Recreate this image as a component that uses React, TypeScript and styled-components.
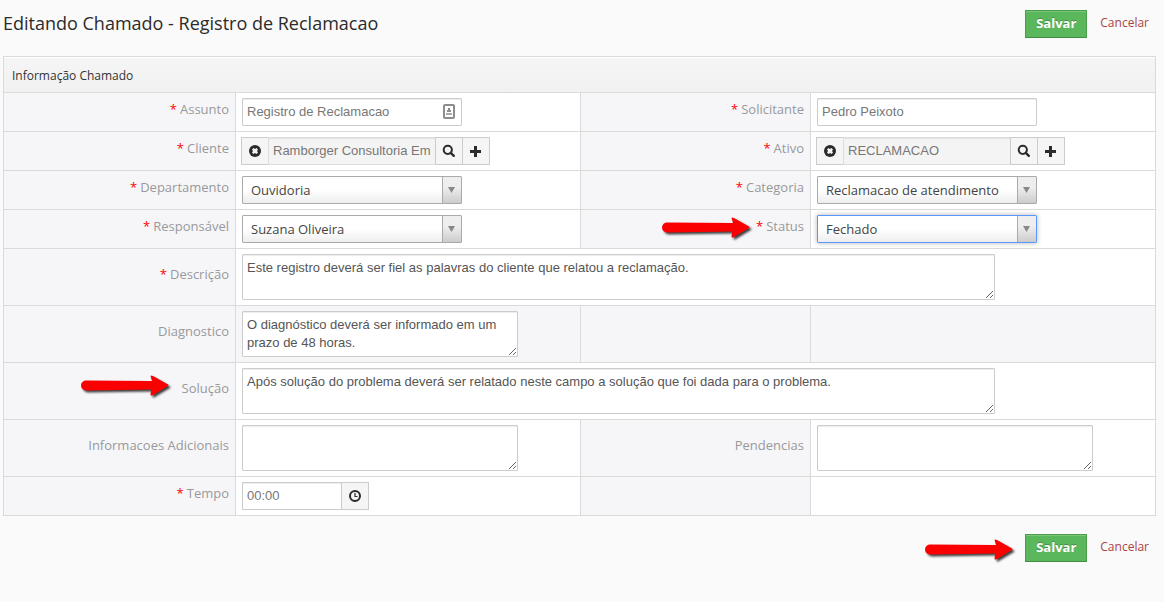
import React from "react";
import styled, { createGlobalStyle, css } from "styled-components";

const GlobalStyle = createGlobalStyle`
  *, *::before, *::after { box-sizing: border-box; }
  body {
    margin: 0;
    background: #fafafa;
    color: #333;
    font-family: "Open Sans", sans-serif;
    font-size: 13px;
    line-height: 20px;
  }
`;

const line = "#dadada";

const Page = styled.form`
  padding: 10px 8px 10px 3px;
`;

const Header = styled.header`
  display: flex;
  align-items: flex-start;
  justify-content: space-between;
  margin-bottom: 18px;
`;

const Title = styled.h1`
  margin: 0;
  font-size: 18px;
  line-height: 26px;
  font-weight: 400;
  color: #2b2b2b;
`;

const Actions = styled.div`
  display: flex;
  align-items: center;
  justify-content: flex-end;
  padding-right: 7px;
`;

const Footer = styled.footer`
  padding-top: 18px;
`;

const SaveButton = styled.button`
  height: 28px;
  padding: 0 10px 2px;
  border: 1px solid #4a9e4a;
  border-bottom-color: #3f8d42;
  background: #5bb75b;
  box-shadow: inset 0 1px 0 rgba(255, 255, 255, 0.2);
  color: #fff;
  font: 700 13px/20px "Open Sans", sans-serif;
  text-shadow: 0 -1px 0 rgba(0, 0, 0, 0.25);
  cursor: pointer;
`;

const CancelLink = styled.a`
  margin-left: 13px;
  padding-bottom: 2px;
  font-size: 12px;
  color: #a94442;
  text-decoration: none;
`;

const Panel = styled.section`
  border: 1px solid ${line};
`;

const PanelTitle = styled.h2`
  margin: 0;
  height: 36px;
  padding: 9px 8px 0;
  border-bottom: 1px solid ${line};
  background: linear-gradient(#f5f5f5, #f1f1f1);
  box-shadow: inset 0 1px 0 #fff;
  font-size: 12px;
  line-height: 20px;
  font-weight: 400;
`;

const Row = styled.div`
  display: grid;
  grid-template-columns: 232fr 345fr 230fr 344fr;
  background: #f6f6f9;
  & + & { border-top: 1px solid ${line}; }
`;

const LabelCell = styled.div`
  position: relative;
  display: flex;
  align-items: center;
  justify-content: flex-end;
  padding: 0 6px 7px;
  border-right: 1px solid ${line};
  color: #999;
`;

const FieldCell = styled.div<{ $wide?: boolean; $shaded?: boolean; $last?: boolean }>`
  display: flex;
  align-items: flex-start;
  min-height: 38px;
  padding: 5px;
  background: ${(p) => (p.$shaded ? "transparent" : "#fff")};
  border-right: ${(p) => (p.$last || p.$wide ? "0" : `1px solid ${line}`)};
  ${(p) => p.$wide && css`grid-column: span 3;`}
`;

const Required = styled.span`
  margin-right: 3px;
  color: #f00;
`;

const control = css`
  border: 1px solid #ccc;
  border-radius: 1px;
  background: #fff;
  box-shadow: inset 0 1px 1px rgba(0, 0, 0, 0.075);
  font: 13px/18px "Liberation Sans", Arial, sans-serif;
  color: #777;
  outline: 0;
`;

const TextInput = styled.input`
  ${control}
  width: 220px;
  height: 28px;
  padding: 3px 4px 5px;
`;

const TextField = styled.div`
  position: relative;
  display: flex;
  margin: 0 1px;
`;

const FieldBadge = styled.svg`
  position: absolute;
  right: 7px;
  top: 6px;
`;

const TextArea = styled.textarea<{ $full?: boolean }>`
  ${control}
  display: block;
  width: ${(p) => (p.$full ? "753px" : "276px")};
  max-width: 100%;
  height: 46px;
  margin: 0 1px;
  padding: 4px;
  color: #555;
  resize: both;
  overflow: hidden;
`;

const Group = styled.div<{ $inset?: boolean }>`
  display: flex;
  margin: 0 ${(p) => (p.$inset ? "1px" : "0")};
`;

const GroupInput = styled(TextInput)<{ $short?: boolean }>`
  width: ${(p) => (p.$short ? "100px" : "168px")};
  border-radius: 0;
  &:read-only { background: #f4f4f4; border-color: #ddd; }
`;

const IconButton = styled.button`
  display: flex;
  align-items: center;
  justify-content: center;
  width: 28px;
  height: 28px;
  margin-left: -1px;
  padding: 0;
  border: 1px solid #ccc;
  background: #f5f5f5;
  color: #2b2b2b;
  cursor: pointer;
  &:first-child { margin-left: 0; }
  &:first-child + input { margin-left: -1px; }
`;

const SelectBox = styled.div<{ $active?: boolean }>`
  position: relative;
  display: flex;
  width: 220px;
  height: 28px;
  margin: 0 1px;
  border: 1px solid ${(p) => (p.$active ? "#5897fb" : "#aaa")};
  border-radius: 1px;
  background: linear-gradient(#fff 50%, #eee);
  box-shadow: ${(p) => (p.$active ? "0 0 5px rgba(0, 0, 0, 0.3)" : "none")};
`;

const Select = styled.select`
  flex: 1;
  appearance: none;
  padding: 0 28px 0 8px;
  border: 0;
  background: transparent;
  color: #444;
  font: 13px/26px "Open Sans", sans-serif;
  outline: 0;
`;

const SelectHandle = styled.span`
  position: absolute;
  inset: 0 0 0 auto;
  display: flex;
  align-items: center;
  justify-content: center;
  width: 19px;
  border-left: 1px solid #aaa;
  background: linear-gradient(#eee 40%, #ccc);
  pointer-events: none;
`;

const Pointer = styled.svg`
  flex: none;
  overflow: visible;
  filter: drop-shadow(2px 2px 1px rgba(0, 0, 0, 0.75));
`;

const LabelPointer = styled.div<{ $top: number; $right: number }>`
  position: absolute;
  top: ${(p) => p.$top}px;
  right: ${(p) => p.$right}px;
  display: flex;
`;

const FooterPointer = styled.div`
  display: flex;
  margin-right: 12px;
  padding-top: 4px;
`;

const Arrow = () => (
  <Pointer width="88" height="22" viewBox="0 0 88 22" aria-hidden="true">
    <path
      d="M5 5.500 L71 6 L69.500 1 Q70 0 72 1 L87 9.500 Q88 10 87 11 L72 20 Q70 21 69.500 20 L70 14.500 L5 15.500 A5 5 0 0 1 5 5.500Z"
      fill="#fa0000"
    />
  </Pointer>
);

const ClearIcon = () => (
  <svg width="12" height="12" viewBox="0 0 12 12" aria-hidden="true">
    <circle cx="6" cy="6" r="6" fill="currentColor" />
    <path d="M3 4.500 4.500 3 6 4 7.500 3 9 4.500 8 6 9 7.500 7.500 9 6 8 4.500 9 3 7.500 4 6z" fill="#f5f5f5" />
  </svg>
);

const SearchIcon = () => (
  <svg width="14" height="14" viewBox="0 0 14 14" fill="none" stroke="currentColor" aria-hidden="true">
    <circle cx="5.800" cy="5.800" r="4.100" strokeWidth="2" />
    <path d="M8.800 8.800 11.800 11.800" strokeWidth="2.400" strokeLinecap="round" />
  </svg>
);

const PlusIcon = () => (
  <svg width="12" height="12" viewBox="0 0 12 12" aria-hidden="true">
    <path d="M4 1h3v4h4v3H7v4H4V8H0V5h4z" fill="currentColor" />
  </svg>
);

const ClockIcon = () => (
  <svg width="12" height="12" viewBox="0 0 12 12" fill="none" stroke="currentColor" aria-hidden="true">
    <circle cx="6" cy="6" r="5" strokeWidth="2" />
    <path d="M6 3v3.500H8.500" strokeWidth="1.200" />
  </svg>
);

const CardIcon = () => (
  <FieldBadge width="12" height="15" viewBox="0 0 12 15" aria-hidden="true">
    <rect x="1" y="1" width="10" height="13" rx="1" fill="#fff" stroke="#8c8c8c" strokeWidth="2" />
    <path d="M5 4h2v3H5zM4 6h4v2H4z" fill="#8c8c8c" />
    <path d="M3 9h6v2H3z" fill="#aaa" />
  </FieldBadge>
);

type PointerSpot = { top: number; right: number };
type LabelProps = { htmlFor: string; text: string; required?: boolean; pointer?: PointerSpot };

const FieldLabel = ({ htmlFor, text, required, pointer }: LabelProps) => (
  <LabelCell>
    {pointer && (
      <LabelPointer $top={pointer.top} $right={pointer.right}>
        <Arrow />
      </LabelPointer>
    )}
    <label htmlFor={htmlFor}>
      {required && <Required>*</Required>}
      {text}
    </label>
  </LabelCell>
);

const Dropdown = ({ id, value, active }: { id: string; value: string; active?: boolean }) => (
  <SelectBox $active={active}>
    <Select id={id} defaultValue={value}>
      <option>{value}</option>
    </Select>
    <SelectHandle>
      <svg width="8" height="6" viewBox="0 0 8 6" aria-hidden="true">
        <path d="M0 0h7L3.500 6z" fill="#888" />
      </svg>
    </SelectHandle>
  </SelectBox>
);

const Lookup = ({ id, value }: { id: string; value: string }) => (
  <Group>
    <IconButton type="button" aria-label="Limpar"><ClearIcon /></IconButton>
    <GroupInput id={id} defaultValue={value} readOnly />
    <IconButton type="button" aria-label="Buscar"><SearchIcon /></IconButton>
    <IconButton type="button" aria-label="Adicionar"><PlusIcon /></IconButton>
  </Group>
);

const FormActions = ({ pointed }: { pointed?: boolean }) => (
  <Actions>
    {pointed && (
      <FooterPointer>
        <Arrow />
      </FooterPointer>
    )}
    <SaveButton type="button">Salvar</SaveButton>
    <CancelLink href="#cancelar">Cancelar</CancelLink>
  </Actions>
);

export default function App() {
  return (
    <>
      <GlobalStyle />
      <Page>
        <Header>
          <Title>Editando Chamado - Registro de Reclamacao</Title>
          <FormActions />
        </Header>
        <Panel>
          <PanelTitle>Informação Chamado</PanelTitle>
          <Row>
            <FieldLabel htmlFor="assunto" text="Assunto" required />
            <FieldCell>
              <TextField>
                <TextInput id="assunto" defaultValue="Registro de Reclamacao" />
                <CardIcon />
              </TextField>
            </FieldCell>
            <FieldLabel htmlFor="solicitante" text="Solicitante" required />
            <FieldCell $last>
              <TextField>
                <TextInput id="solicitante" defaultValue="Pedro Peixoto" />
              </TextField>
            </FieldCell>
          </Row>
          <Row>
            <FieldLabel htmlFor="cliente" text="Cliente" required />
            <FieldCell><Lookup id="cliente" value="Ramborger Consultoria Empresarial" /></FieldCell>
            <FieldLabel htmlFor="ativo" text="Ativo" required />
            <FieldCell $last><Lookup id="ativo" value="RECLAMACAO" /></FieldCell>
          </Row>
          <Row>
            <FieldLabel htmlFor="departamento" text="Departamento" required />
            <FieldCell><Dropdown id="departamento" value="Ouvidoria" /></FieldCell>
            <FieldLabel htmlFor="categoria" text="Categoria" required />
            <FieldCell $last><Dropdown id="categoria" value="Reclamacao de atendimento" /></FieldCell>
          </Row>
          <Row>
            <FieldLabel htmlFor="responsavel" text="Responsável" required />
            <FieldCell><Dropdown id="responsavel" value="Suzana Oliveira" /></FieldCell>
            <FieldLabel htmlFor="status" text="Status" required pointer={{ top: 7, right: 60 }} />
            <FieldCell $last><Dropdown id="status" value="Fechado" active /></FieldCell>
          </Row>
          <Row>
            <FieldLabel htmlFor="descricao" text="Descrição" required />
            <FieldCell $wide>
              <TextArea id="descricao" $full defaultValue="Este registro deverá ser fiel as palavras do cliente que relatou a reclamação." />
            </FieldCell>
          </Row>
          <Row>
            <FieldLabel htmlFor="diagnostico" text="Diagnostico" />
            <FieldCell $shaded>
              <TextArea id="diagnostico" defaultValue="O diagnóstico deverá ser informado em um prazo de 48 horas." />
            </FieldCell>
            <LabelCell />
            <FieldCell $shaded $last />
          </Row>
          <Row>
            <FieldLabel htmlFor="solucao" text="Solução" pointer={{ top: 12, right: 66 }} />
            <FieldCell $wide>
              <TextArea id="solucao" $full defaultValue="Após solução do problema deverá ser relatado neste campo a solução que foi dada para o problema." />
            </FieldCell>
          </Row>
          <Row>
            <FieldLabel htmlFor="adicionais" text="Informacoes Adicionais" />
            <FieldCell><TextArea id="adicionais" /></FieldCell>
            <FieldLabel htmlFor="pendencias" text="Pendencias" />
            <FieldCell $last><TextArea id="pendencias" /></FieldCell>
          </Row>
          <Row>
            <FieldLabel htmlFor="tempo" text="Tempo" required />
            <FieldCell>
              <Group $inset>
                <GroupInput id="tempo" $short defaultValue="00:00" />
                <IconButton type="button" aria-label="Escolher hora"><ClockIcon /></IconButton>
              </Group>
            </FieldCell>
            <LabelCell />
            <FieldCell $last />
          </Row>
        </Panel>
        <Footer>
          <FormActions pointed />
        </Footer>
      </Page>
    </>
  );
}
